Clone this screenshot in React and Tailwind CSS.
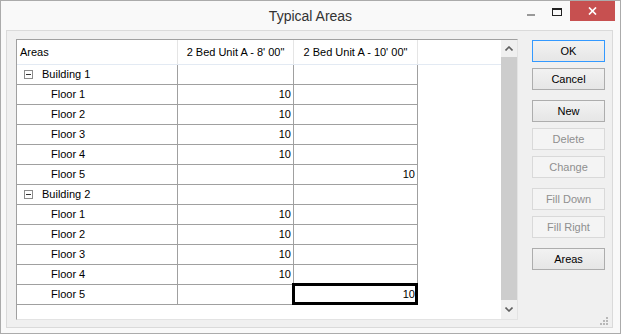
import React from "react";

const font = { fontFamily: '"Liberation Sans", Arial, sans-serif' };

const rows = [
  { type: "b", label: "Building 1", a: "", b: "" },
  { type: "f", label: "Floor 1", a: "10", b: "" },
  { type: "f", label: "Floor 2", a: "10", b: "" },
  { type: "f", label: "Floor 3", a: "10", b: "" },
  { type: "f", label: "Floor 4", a: "10", b: "" },
  { type: "f", label: "Floor 5", a: "", b: "10" },
  { type: "b", label: "Building 2", a: "", b: "" },
  { type: "f", label: "Floor 1", a: "10", b: "" },
  { type: "f", label: "Floor 2", a: "10", b: "" },
  { type: "f", label: "Floor 3", a: "10", b: "" },
  { type: "f", label: "Floor 4", a: "10", b: "" },
  { type: "f", label: "Floor 5", a: "", b: "10", sel: true },
];

const buttons = [
  { label: "OK", focus: true, mt: "mt-0" },
  { label: "Cancel", mt: "mt-[6px]" },
  { label: "New", mt: "mt-[10px]" },
  { label: "Delete", disabled: true, mt: "mt-[6px]" },
  { label: "Change", disabled: true, mt: "mt-[6px]" },
  { label: "Fill Down", disabled: true, mt: "mt-[10px]" },
  { label: "Fill Right", disabled: true, mt: "mt-[6px]" },
  { label: "Areas", mt: "mt-[10px]" },
];

function Btn({ label, focus, disabled, mt }) {
  let cls =
    "h-[22px] w-[73px] flex items-center justify-center text-[11px] border " + mt + " ";
  if (disabled) cls += "border-[#d9d9d9] bg-[#f4f4f4] text-[#8f8f8f]";
  else if (focus)
    cls += "border-[#3399ff] bg-gradient-to-b from-[#f2f2f2] to-[#e6e6e6] text-black";
  else cls += "border-[#adadad] bg-gradient-to-b from-[#f2f2f2] to-[#e6e6e6] text-black";
  return <div className={cls}>{label}</div>;
}

function Chevron({ up }) {
  return (
    <svg width="8" height="5" viewBox="0 0 8 5">
      <path
        d={up ? "M0.5 4.5 L4 1 L7.5 4.5" : "M0.5 0.5 L4 4 L7.5 0.5"}
        stroke="#606060"
        strokeWidth="1.6"
        fill="none"
      />
    </svg>
  );
}

export default function App() {
  return (
    <div className="w-[621px] h-[336px] bg-white" style={font}>
      <div className="w-[621px] h-[334px] border border-[#ababab] bg-[#f9f9f9] flex flex-col">
        {/* title bar */}
        <div className="h-[29px] grid grid-cols-[1fr_auto_1fr]">
          <div />
          <div className="text-[14px] text-[#333333] flex items-center pt-[1px]">Typical Areas</div>
          <div className="flex justify-end items-start pr-[5px]">
            <div className="w-[28px] h-[20px] flex items-start justify-center pt-[13px] pl-[2px]">
              <div className="w-[8px] h-[2px] bg-[#999999]" />
            </div>
            <div className="w-[26px] h-[20px] flex items-start justify-center pt-[7px]">
              <div className="w-[10px] h-[8px] border border-t-2 border-[#222222]" />
            </div>
            <div className="w-[45px] h-[20px] bg-[#c75050] flex items-center justify-center">
              <svg width="9" height="8" viewBox="0 0 9 8">
                <path d="M1 0.5 L8 7.5 M8 0.5 L1 7.5" stroke="white" strokeWidth="1.7" />
              </svg>
            </div>
          </div>
        </div>
        {/* client area */}
        <div className="ml-[5px] w-[607px] h-[298px] border border-[#dadada] bg-[#f0f0f0] relative flex pl-[9px] pt-[8px]">
          {/* grid */}
          <div className="w-[502px] h-[281px] border border-t-[#a0a0a0] border-l-[#a0a0a0] border-r-[#e3e3e3] border-b-[#e3e3e3] bg-white flex">
            <div className="w-[484px] flex flex-col text-[11px] text-black">
              {/* header */}
              <div className="h-[25px] flex border-b border-[#e3eaf3]">
                <div className="w-[161px] border-r border-[#e5e5e5] flex items-center pl-[3px]">Areas</div>
                <div className="w-[116px] border-r border-[#e5e5e5] flex items-center justify-center">
                  2 Bed Unit A - 8' 00"
                </div>
                <div className="w-[124px] border-r border-[#e5e5e5] flex items-center justify-center">
                  2 Bed Unit A - 10' 00"
                </div>
              </div>
              {rows.map((r, i) => (
                <div key={i} className="h-[20px] flex">
                  <div className="w-[161px] border-r border-b border-[#a0a0a0] flex items-center">
                    {r.type === "b" ? (
                      <>
                        <div className="ml-[7px] w-[9px] h-[9px] border border-[#8c8c8c] flex items-center justify-center">
                          <div className="w-[5px] h-[1px] bg-[#333333]" />
                        </div>
                        <span className="ml-[9px]">{r.label}</span>
                      </>
                    ) : (
                      <span className="ml-[34px]">{r.label}</span>
                    )}
                  </div>
                  <div className="w-[116px] border-r border-b border-[#a0a0a0] flex items-center justify-end pr-[2px]">
                    {r.a}
                  </div>
                  <div className="w-[124px] border-r border-b border-[#a0a0a0] flex items-center justify-end pr-[2px] relative">
                    {r.b}
                    {r.sel && (
                      <div className="absolute left-[-2px] top-[-2px] right-[-1px] bottom-[-1px] border-[3px] border-black" />
                    )}
                  </div>
                </div>
              ))}
            </div>
            {/* scrollbar */}
            <div className="w-[16px] bg-[#f0f0f0] flex flex-col">
              <div className="h-[17px] flex items-center justify-center">
                <Chevron up />
              </div>
              <div className="h-[243px] bg-[#cdcdcd]" />
              <div className="flex-1 flex items-center justify-center">
                <Chevron />
              </div>
            </div>
          </div>
          {/* buttons */}
          <div className="ml-[14px] pt-[1px] flex flex-col">
            {buttons.map((b) => (
              <Btn key={b.label} {...b} />
            ))}
          </div>
          {/* grip */}
          <svg className="absolute right-[3px] bottom-[1px]" width="9" height="9" viewBox="0 0 9 9">
            <rect x="6" y="0" width="2" height="2" fill="#b8b8b8" />
            <rect x="3" y="3" width="2" height="2" fill="#b8b8b8" />
            <rect x="6" y="3" width="2" height="2" fill="#b8b8b8" />
            <rect x="0" y="6" width="2" height="2" fill="#b8b8b8" />
            <rect x="3" y="6" width="2" height="2" fill="#b8b8b8" />
            <rect x="6" y="6" width="2" height="2" fill="#b8b8b8" />
          </svg>
        </div>
      </div>
    </div>
  );
}
